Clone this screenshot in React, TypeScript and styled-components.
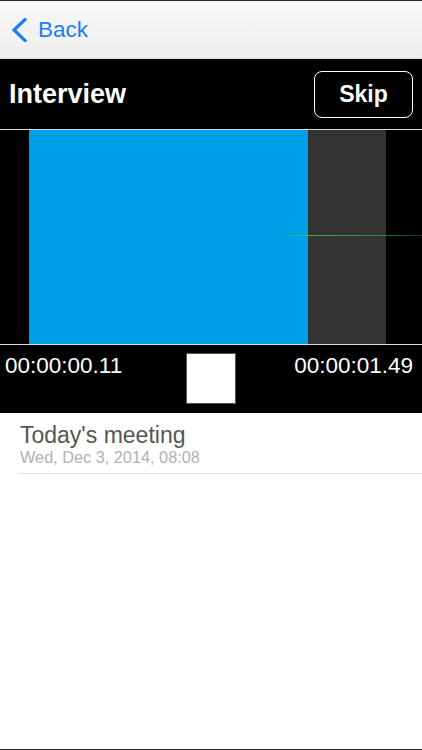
import React, {FC} from 'react';
import styled, {createGlobalStyle} from 'styled-components';

const GlobalStyle = createGlobalStyle`
  html, body {
    margin: 0;
    padding: 0;
    background: #ffffff;
  }
  body {
    font-family: 'Liberation Sans', Arial, Helvetica, sans-serif;
  }
`;

const recording = {
  title: 'Interview',
  elapsed: '00:00:00.11',
  total: '00:00:01.49',
};

const memos = [{name: "Today's meeting", date: 'Wed, Dec 3, 2014, 08:08'}];

const Waveform: FC = () => (
  <WaveSvg viewBox="0 0 422 214" width="422" height="214">
    <defs>
      <linearGradient id="level" x1="0" x2="1" y1="0" y2="0">
        <stop offset="0" stopColor="#3ec24c" stopOpacity="0" />
        <stop offset="0.15" stopColor="#3ec24c" stopOpacity="0.9" />
        <stop offset="0.7" stopColor="#2fa63c" stopOpacity="0.75" />
        <stop offset="1" stopColor="#2fa63c" stopOpacity="0.35" />
      </linearGradient>
    </defs>
    <rect x="0" y="0" width="422" height="214" fill="#000" />
    <rect x="29" y="0" width="279" height="214" fill="#00a0e8" />
    <rect x="308" y="0" width="78" height="214" fill="#333333" />
    <rect x="280" y="105" width="142" height="1" fill="url(#level)" />
  </WaveSvg>
);

const App: FC = () => {
  return (
    <>
      <GlobalStyle />
      <Screen>
        <NavBar>
          <BackButton>
            <svg width="17" height="24" viewBox="0 0 17 24">
              <path
                d="M14 1.5 L3 12 L14 22.5"
                fill="none"
                stroke="#1e7ff2"
                strokeWidth="3.2"
                strokeLinecap="square"
              />
            </svg>
            <span>Back</span>
          </BackButton>
        </NavBar>

        <Header>
          <Title>{recording.title}</Title>
          <SkipButton>Skip</SkipButton>
        </Header>

        <Divider />
        <Waveform />
        <Divider />

        <Controls>
          <Time>{recording.elapsed}</Time>
          <StopButton aria-label="Stop" />
          <Time align="right">{recording.total}</Time>
        </Controls>

        <MemoList>
          {memos.map(memo => (
            <MemoRow key={memo.name}>
              <MemoName>{memo.name}</MemoName>
              <MemoDate>{memo.date}</MemoDate>
            </MemoRow>
          ))}
        </MemoList>
      </Screen>
    </>
  );
};

export default App;

const Screen = styled.div`
  width: 422px;
  height: 750px;
  box-sizing: border-box;
  display: flex;
  flex-direction: column;
  border-top: 1px solid #2a2a2a;
  border-bottom: 1px solid #2a2a2a;
  overflow: hidden;
  background: #ffffff;
`;

const NavBar = styled.div`
  height: 58px;
  flex-shrink: 0;
  display: flex;
  align-items: center;
  padding-left: 11px;
  background: linear-gradient(#f8f8f8, #eeeeee);
  border-bottom: 1px solid #dcdcdc;
  box-sizing: border-box;
`;

const BackButton = styled.div`
  display: flex;
  align-items: center;
  gap: 10px;
  color: #1e7ff2;
  font-size: 22.5px;
  line-height: 26px;
`;

const Header = styled.div`
  height: 70px;
  flex-shrink: 0;
  display: flex;
  align-items: center;
  justify-content: space-between;
  padding: 0 9px 0 9px;
  background: #000000;
`;

const Title = styled.div`
  color: #ffffff;
  font-size: 27px;
  font-weight: bold;
  line-height: 30px;
`;

const SkipButton = styled.div`
  width: 99px;
  height: 47px;
  box-sizing: border-box;
  display: flex;
  align-items: center;
  justify-content: center;
  border: 1.5px solid #ffffff;
  border-radius: 8px;
  color: #ffffff;
  font-size: 23px;
  font-weight: bold;
`;

const Divider = styled.div`
  height: 1px;
  flex-shrink: 0;
  background: #d6dde2;
`;

const WaveSvg = styled.svg`
  display: block;
  flex-shrink: 0;
`;

const Controls = styled.div`
  height: 68px;
  flex-shrink: 0;
  display: grid;
  grid-template-columns: 1fr 48px 1fr;
  align-items: start;
  background: #000000;
`;

const Time = styled.div<{align?: 'left' | 'right'}>`
  padding: 8px 9px 0 5px;
  color: #ffffff;
  font-size: 22.5px;
  line-height: 26px;
  text-align: ${props => props.align || 'left'};
  white-space: nowrap;
`;

const StopButton = styled.div`
  width: 48px;
  height: 49px;
  margin-top: 9px;
  background: #ffffff;
  box-shadow: 0 0 0 1px #555555;
`;

const MemoList = styled.div`
  flex: 1;
  background: #ffffff;
`;

const MemoRow = styled.div`
  margin-left: 18px;
  padding: 9px 0 7px 2px;
  border-bottom: 1px solid #e2e2e2;
`;

const MemoName = styled.div`
  color: #555555;
  font-size: 23px;
  line-height: 26px;
`;

const MemoDate = styled.div`
  color: #b2b2b2;
  font-size: 16.3px;
  line-height: 18px;
`;
